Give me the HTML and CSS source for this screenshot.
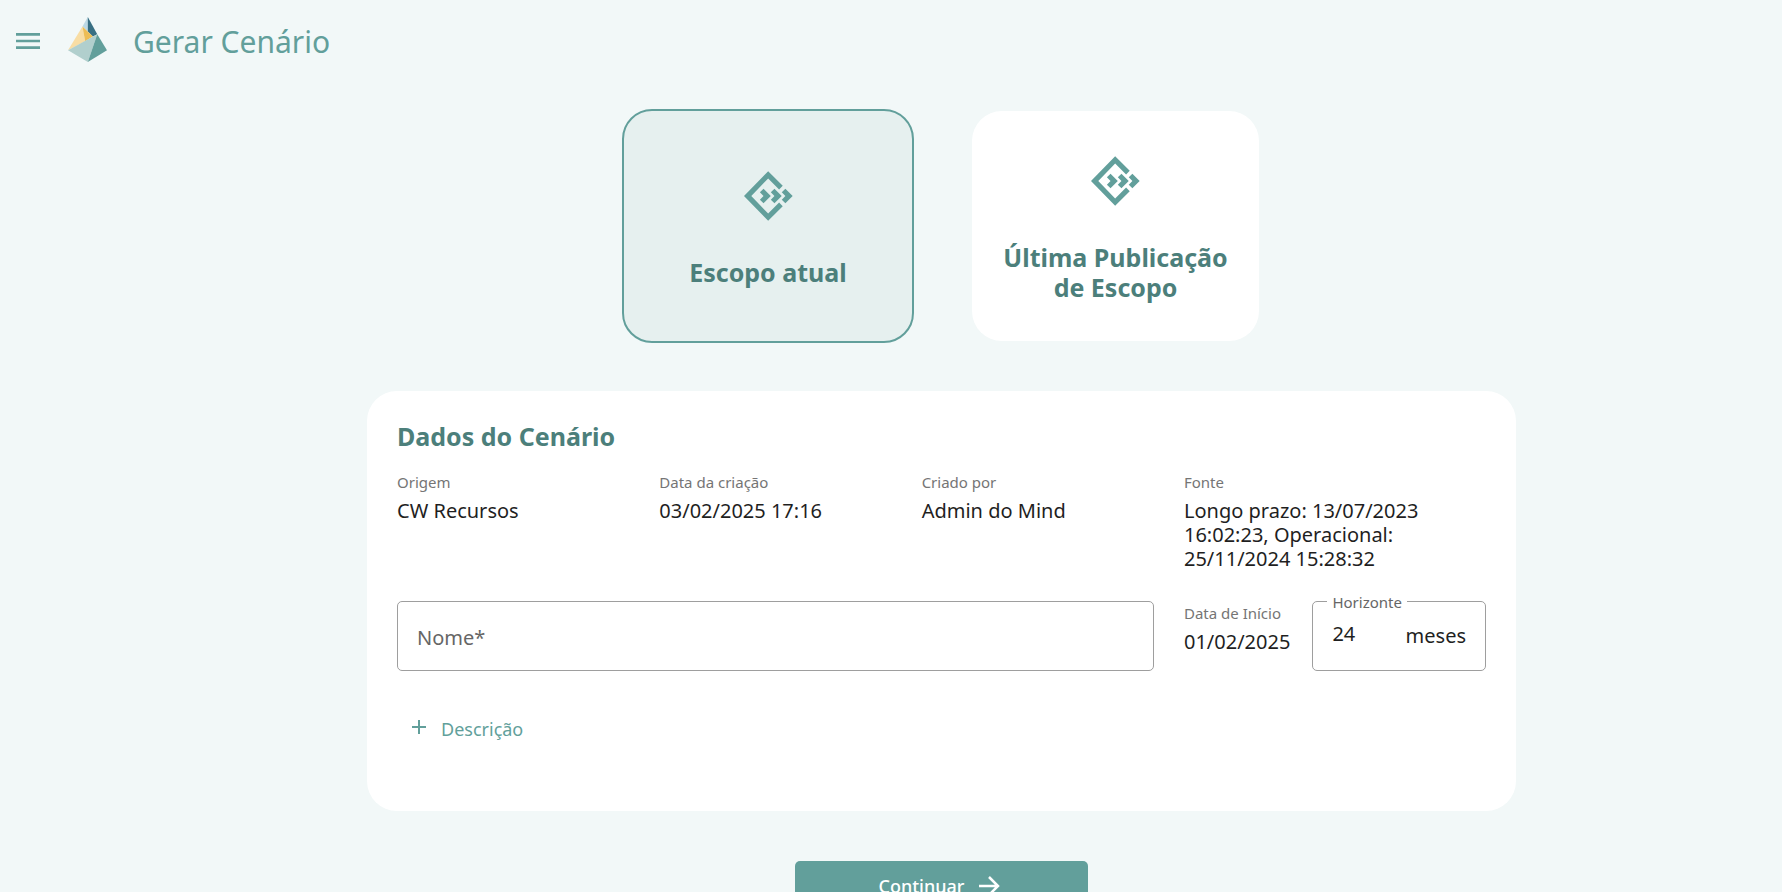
FILE: index.html
```html
<!DOCTYPE html>
<html lang="pt-BR">
<head>
<meta charset="utf-8">
<meta name="viewport" content="width=device-width, initial-scale=1">
<title>Gerar Cenário</title>
<link rel="stylesheet" href="styles.css">
</head>
<body>
<svg class="sprite" aria-hidden="true">
  <symbol id="scope" viewBox="0 0 148 150">
    <path d="M117 44 73 0 0 75 73 150 117 106 106 95 73 128 22 75 73 22 106 55Z"/>
    <path d="M59 53 81 75 59 97 48 86 59 75 48 64Z"/>
    <path d="M92 53 114 75 92 97 81 86 92 75 81 64Z"/>
    <path d="M125 53 147 75 125 97 114 86 125 75 114 64Z"/>
  </symbol>
</svg>
<div class="app">
  <header class="topbar">
    <button class="menu-button" type="button" aria-label="Menu">
      <svg class="menu-icon" viewBox="0 0 24 24"><path d="M3 18h18v-2H3v2zm0-5h18v-2H3v2zm0-7v2h18V6H3z"/></svg>
    </button>
    <svg class="logo" viewBox="0 0 116 134" aria-hidden="true">
      <path fill="#bcd9e5" d="M59 0 43 28 59 44Z"/>
      <path fill="#386f83" d="M59 0 87 51 74 58 59 43Z"/>
      <path fill="#f8dda4" d="M43 28 51 72 0 99Z"/>
      <path fill="#edbd55" d="M43 28 74 58 51 72Z"/>
      <path fill="#b1cfcd" d="M0 99 87 51 59 134Z"/>
      <path fill="#629f9b" d="M87 51 116 99 59 134Z"/>
    </svg>
    <h1 class="page-title">Gerar Cenário</h1>
  </header>
  <main class="content">
    <div class="options">
      <button class="option option-selected" type="button" aria-pressed="true">
        <svg class="option-icon" aria-hidden="true"><use href="#scope"/></svg>
        <span>Escopo atual</span>
      </button>
      <button class="option" type="button" aria-pressed="false">
        <svg class="option-icon" aria-hidden="true"><use href="#scope"/></svg>
        <span>Última Publicação de Escopo</span>
      </button>
    </div>
    <form class="panel">
      <h2 class="panel-title">Dados do Cenário</h2>
      <div class="details">
        <div class="detail"><span class="label">Origem</span><span class="value">CW Recursos</span></div>
        <div class="detail"><span class="label">Data da criação</span><span class="value">03/02/2025 17:16</span></div>
        <div class="detail"><span class="label">Criado por</span><span class="value">Admin do Mind</span></div>
        <div class="detail"><span class="label">Fonte</span><span class="value">Longo prazo: 13/07/2023 16:02:23, Operacional: 25/11/2024 15:28:32</span></div>
        <input class="name-input" type="text" placeholder="Nome*" aria-label="Nome" required>
        <div class="period">
          <div class="detail start"><span class="label">Data de Início</span><span class="value">01/02/2025</span></div>
          <div class="horizon">
            <label class="horizon-label" for="horizon">Horizonte</label>
            <input class="horizon-input" id="horizon" type="text" inputmode="numeric" value="24">
            <span class="horizon-unit">meses</span>
          </div>
        </div>
      </div>
      <button class="add-button" type="button">
        <svg class="add-icon" viewBox="0 0 14 14" aria-hidden="true"><path d="M7 0V14M0 7H14"/></svg>
        <span>Descrição</span>
      </button>
    </form>
    <button class="continue-button" type="button">
      <span>Continuar</span>
      <svg class="arrow-icon" viewBox="0 0 22 22" aria-hidden="true"><path d="M1 11H20M11 2 20 11 11 20"/></svg>
    </button>
  </main>
</div>
</body>
</html>
```
FILE: styles.css
```css
* { box-sizing: border-box; }

body {
  margin: 0;
  background: #f2f8f8;
  color: #1f1f1f;
  font-family: "Noto Sans", "Open Sans", sans-serif;
}

button, input {
  font: inherit;
  color: inherit;
}

button {
  border: 0;
  background: none;
  padding: 0;
  cursor: pointer;
}

.sprite { display: none; }

.app {
  height: 100vh;
  overflow: hidden;
}

.topbar {
  display: flex;
  align-items: center;
  height: 82px;
  padding-left: 12px;
}

.menu-button { display: flex; }

.menu-icon {
  width: 32px;
  height: 32px;
  fill: #629f9b;
}

.logo {
  width: 39px;
  height: 45px;
  margin: 0 26px 4px 24px;
}

.page-title {
  margin: 0;
  padding-top: 2px;
  color: #629f9b;
  font-size: 30px;
  font-weight: 400;
  line-height: 40px;
}

.content {
  display: flex;
  flex-direction: column;
  align-items: center;
  padding: 27px 0 24px 101px;
}

.options {
  display: flex;
  align-items: center;
  gap: 58px;
  margin-right: 2px;
}

.option {
  display: flex;
  flex-direction: column;
  align-items: center;
  justify-content: center;
  gap: 36px;
  width: 287px;
  min-height: 230px;
  padding: 30px 24px 24px;
  border-radius: 30px;
  background: #fff;
  color: #4c7f7b;
  font-size: 25px;
  font-weight: 700;
  line-height: 30px;
}

.option-selected {
  width: 292px;
  min-height: 234px;
  border: 2px solid #629f9b;
  background: #e6f0ef;
}

.option-icon {
  width: 49px;
  height: 50px;
  fill: #629f9b;
}

.panel {
  width: 100%;
  max-width: 1149px;
  min-height: 420px;
  margin-top: 48px;
  padding: 30px;
  border-radius: 30px;
  background: #fff;
}

.panel-title {
  margin: 0 0 21px;
  color: #4c7f7b;
  font-size: 25px;
  font-weight: 700;
  line-height: 30px;
}

.details {
  display: grid;
  grid-template-columns: 10fr 10fr 10fr 13fr;
  gap: 30px;
}

.detail {
  display: flex;
  flex-direction: column;
  gap: 7px;
}

.label {
  color: #757575;
  font-size: 15px;
  line-height: 20px;
}

.value {
  font-size: 20px;
  line-height: 24px;
}

.name-input {
  grid-column: span 3;
  width: 100%;
  height: 70px;
  padding: 2px 19px 0;
  border: 1px solid #9e9e9e;
  border-radius: 5px;
  background: none;
  font-size: 20px;
}

.name-input::placeholder {
  color: #666;
  opacity: 1;
}

.period {
  display: flex;
  align-items: flex-start;
  gap: 22px;
}

.start {
  flex: none;
  padding-top: 2px;
}

.horizon {
  position: relative;
  display: flex;
  flex: 1;
  align-items: center;
  justify-content: space-between;
  min-width: 0;
  height: 70px;
  padding: 0 19px 2px;
  border: 1px solid #9e9e9e;
  border-radius: 5px;
  font-size: 20px;
}

.horizon-label {
  position: absolute;
  top: -10px;
  left: 14px;
  padding: 0 5px;
  background: #fff;
  color: #666;
  font-size: 15px;
  line-height: 20px;
}

.horizon-input {
  width: 60px;
  height: 28px;
  padding: 0;
  margin-bottom: 4px;
  border: 0;
  background: none;
}

.add-button {
  display: flex;
  align-items: center;
  gap: 15px;
  margin-top: 40px;
  padding: 6px 15px;
  color: #629f9b;
  font-size: 18px;
  font-weight: 400;
  line-height: 24px;
}

.add-icon {
  width: 14px;
  height: 14px;
  margin-bottom: 4px;
  fill: none;
  stroke: #629f9b;
  stroke-width: 2;
}

.continue-button {
  display: flex;
  align-items: center;
  justify-content: center;
  gap: 14px;
  width: 293px;
  height: 50px;
  margin-top: 50px;
  padding-right: 4px;
  border-radius: 5px;
  background: #629f9b;
  color: #fff;
  font-size: 18px;
  font-weight: 500;
}

.arrow-icon {
  width: 22px;
  height: 22px;
  fill: none;
  stroke: #fff;
  stroke-width: 2.5;
}
```
